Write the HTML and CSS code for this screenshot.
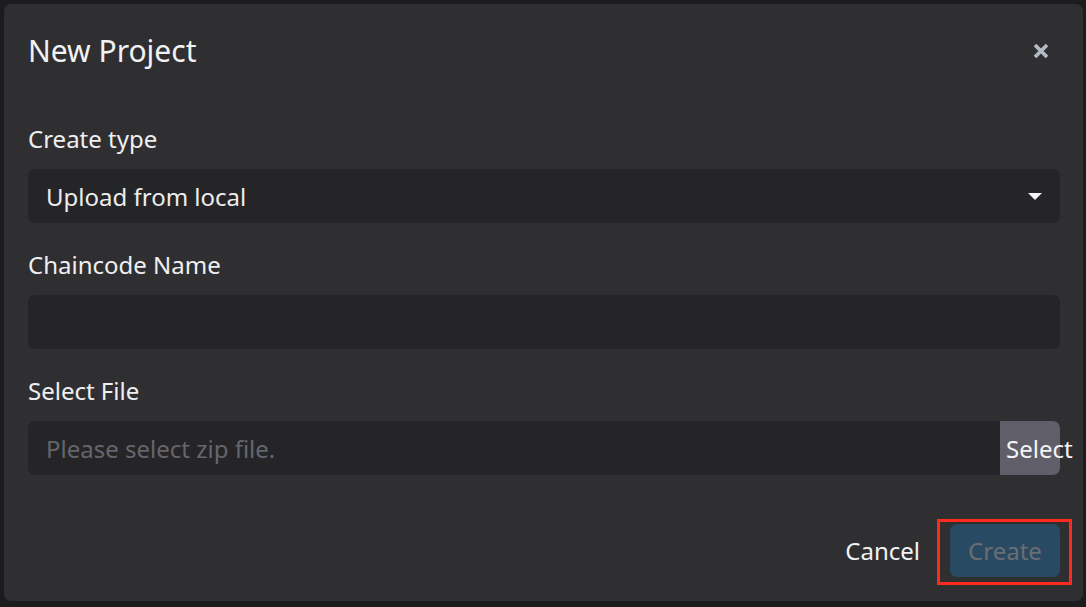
FILE: index.html
```html
<!DOCTYPE html>
<html lang="en">
<head>
<meta charset="utf-8">
<title>New Project</title>
<link rel="stylesheet" href="styles.css">
</head>
<body>
  <div class="modal">
    <header class="modal-header">
      <h1 class="modal-title">New Project</h1>
      <button class="close-btn" aria-label="Close">
        <svg width="16" height="16" viewBox="0 0 16 16"><path d="M2 2 L14 14 M14 2 L2 14" stroke="#b3bac2" stroke-width="3.8" stroke-linecap="butt"/></svg>
      </button>
    </header>
    <div class="modal-body">
      <div class="field">
        <label class="field-label">Create type</label>
        <div class="control select-control">
          <span class="control-text">Upload from local</span>
          <span class="caret"></span>
        </div>
      </div>
      <div class="field">
        <label class="field-label">Chaincode Name</label>
        <div class="control"></div>
      </div>
      <div class="field">
        <label class="field-label">Select File</label>
        <div class="control file-control">
          <span class="control-text placeholder">Please select zip file.</span>
          <span class="select-btn">Select</span>
        </div>
      </div>
    </div>
    <footer class="modal-footer">
      <button class="btn btn-cancel">Cancel</button>
      <button class="btn btn-create">Create</button>
    </footer>
  </div>
</body>
</html>
```

FILE: styles.css
```css
html, body {
  margin: 0;
  padding: 0;
}
body {
  background: #1c1c1e;
  width: 1086px;
  height: 607px;
  overflow: hidden;
  font-family: "Noto Sans", "Open Sans", sans-serif;
  color: #ececee;
  padding: 4px 3px 0 4px;
  box-sizing: border-box;
}
.modal {
  width: 1079px;
  height: 597px;
  background: #2f2f32;
  border-radius: 7px;
  box-sizing: border-box;
  padding: 24px 23px 24px 24px;
  display: flex;
  flex-direction: column;
}
.modal-header {
  display: flex;
  align-items: center;
  justify-content: space-between;
  height: 45px;
}
.modal-title {
  margin: 0;
  font-size: 30px;
  line-height: 45px;
  font-weight: 400;
  color: #f2f2f4;
}
.close-btn {
  background: none;
  border: 0;
  padding: 0;
  width: 16px;
  height: 16px;
  margin-right: 11px;
  display: flex;
}
.modal-body {
  padding-top: 48px;
  display: flex;
  flex-direction: column;
}
.field {
  display: flex;
  flex-direction: column;
  margin-bottom: 24px;
}
.field-label {
  font-size: 24px;
  line-height: 36px;
  margin-bottom: 12px;
  color: #efeff1;
}
.control {
  height: 54px;
  background: #252527;
  border-radius: 7px;
  display: flex;
  align-items: center;
  box-sizing: border-box;
  padding-left: 18px;
  font-size: 24px;
}
.control-text {
  flex: 1;
  color: #ececee;
}
.placeholder {
  color: #65656d;
}
.select-control {
  padding-right: 18px;
}
.caret {
  width: 0;
  height: 0;
  border-left: 7px solid transparent;
  border-right: 7px solid transparent;
  border-top: 7px solid #f4f4f6;
  margin-top: 1px;
}
.file-control {
  padding-right: 0;
}
.select-btn {
  width: 60px;
  height: 54px;
  box-sizing: border-box;
  padding-left: 6px;
  background: #5f5e69;
  border-radius: 0 7px 7px 0;
  display: flex;
  align-items: center;
  white-space: nowrap;
  color: #f4f4f6;
}
.modal-footer {
  margin-top: auto;
  display: flex;
  justify-content: flex-end;
  align-items: center;
  gap: 11px;
}
.btn {
  font-family: "Noto Sans", "Open Sans", sans-serif;
  font-size: 24px;
  height: 53px;
  border: 0;
  border-radius: 7px;
  padding: 0 19px;
  background: transparent;
}
.btn-cancel {
  color: #f2f2f4;
}
.btn-create {
  position: relative;
  background: #284a62;
  color: #6b6e72;
  width: 110px;
  padding: 0;
}
.btn-create::after {
  content: "";
  position: absolute;
  left: -13px;
  top: -5px;
  right: -12px;
  bottom: -8px;
  border: 3px solid #fe2a1d;
  pointer-events: none;
}
```
